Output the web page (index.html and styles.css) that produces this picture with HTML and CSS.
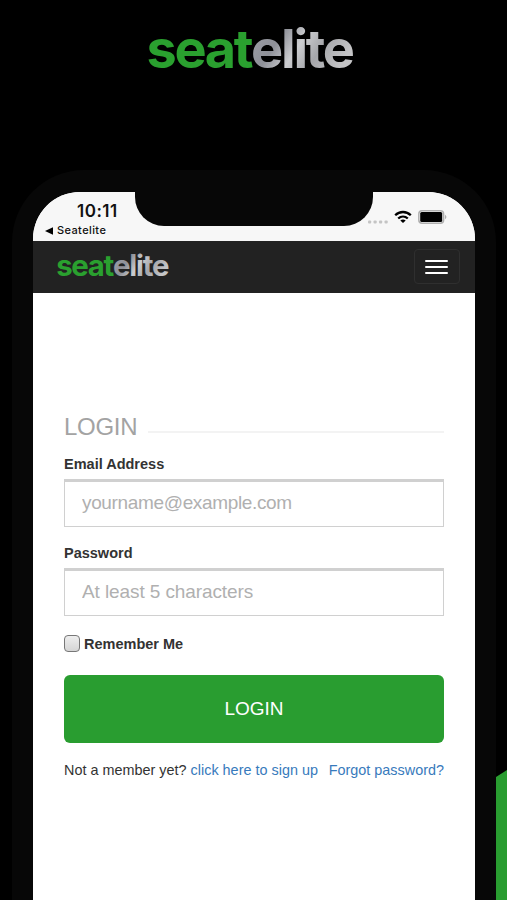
FILE: index.html
```html
<!DOCTYPE html>
<html lang="en">
<head>
  <meta charset="UTF-8" />
  <meta name="viewport" content="width=device-width, initial-scale=1" />
  <title>Seatelite</title>
  <link rel="stylesheet" href="styles.css">
</head>
<body>

  <svg class="corner" viewBox="0 0 11 130">
    <path d="M0 7 L11 0 V130 H0 Z" fill="#299d30" />
  </svg>

  <header class="brand">
    <svg class="logo" viewBox="0 0 206 46" role="img" aria-label="seatelite">
      <defs>
        <linearGradient id="silver" x1="0" y1="0" x2="1" y2="0.4">
          <stop offset="0" stop-color="#a2a3ab" />
          <stop offset="0.35" stop-color="#8e9098" />
          <stop offset="0.55" stop-color="#cccdd0" />
          <stop offset="0.75" stop-color="#a5a6aa" />
          <stop offset="1" stop-color="#c4c4c6" />
        </linearGradient>
      </defs>
      <text class="seat" x="-1.5" y="43" textLength="107" lengthAdjust="spacing">seat</text>
      <text class="elite" x="103" y="43" textLength="104" lengthAdjust="spacing">elite</text>
    </svg>
  </header>

  <main class="phone">
    <div class="screen">
      <div class="status-bar">
        <div class="notch"></div>
        <div class="status-left">
          <div class="time">10:11</div>
          <div class="back">
            <svg width="8" height="8" viewBox="0 0 8 8"><path d="M0 4 L8 0.3 V7.7 Z" /></svg>
            <span>Seatelite</span>
          </div>
        </div>
        <div class="status-right">
          <svg class="dots" width="20" height="4" viewBox="0 0 20 4" fill="#c4c4c4">
            <rect x="0" y="0.5" width="3.2" height="3" rx="1" />
            <rect x="5.5" y="0.5" width="3.2" height="3" rx="1" />
            <rect x="11" y="0.5" width="3.2" height="3" rx="1" />
            <rect x="16.5" y="0.5" width="3.2" height="3" rx="1" />
          </svg>
          <svg class="wifi" width="18" height="14" viewBox="0 0 18 14" fill="none" stroke="#000" stroke-width="2.3">
            <path d="M1.2 5.2 C5.6 0.9 12.4 0.9 16.8 5.2" />
            <path d="M4.2 8.5 C7 5.9 11 5.9 13.8 8.5" />
            <path d="M9 13 L6.3 10.4 C7.9 9.1 10.1 9.1 11.7 10.4 Z" fill="#000" stroke="none" />
          </svg>
          <svg class="battery" width="29" height="14" viewBox="0 0 29 14">
            <rect x="0.8" y="0.8" width="24.8" height="12.4" rx="3.2" fill="#f7f7f7" stroke="#b0b0b0" stroke-width="1.5" />
            <rect x="2.2" y="2.1" width="22" height="9.8" rx="1.5" />
            <path d="M27 4.8 C28.9 5.6 28.9 8.4 27 9.2 Z" fill="#b0b0b0" />
          </svg>
        </div>
      </div>

      <nav class="navbar">
        <svg class="logo-small" viewBox="0 0 206 46" role="img" aria-label="seatelite">
          <text class="seat" x="-1.5" y="43" textLength="107" lengthAdjust="spacing">seat</text>
          <text class="elite" x="103" y="43" textLength="104" lengthAdjust="spacing">elite</text>
        </svg>
        <button class="toggle" aria-label="Menu">
          <span></span>
          <span></span>
          <span></span>
        </button>
      </nav>

      <form class="login-form">
        <h1><span>LOGIN</span></h1>
        <label for="email">Email Address</label>
        <input class="field" id="email" type="text" placeholder="yourname@example.com">
        <label for="password">Password</label>
        <input class="field" id="password" type="password" placeholder="At least 5 characters">
        <label class="remember"><input type="checkbox"><span>Remember Me</span></label>
        <button class="submit" type="button">LOGIN</button>
        <div class="links">
          <span>Not a member yet? <a href="#">click here to sign up</a></span>
          <a href="#">Forgot password?</a>
        </div>
      </form>
    </div>
  </main>

</body>
</html>
```

FILE: styles.css
```css
* {
  box-sizing: border-box;
  margin: 0;
  padding: 0;
}

body {
  position: relative;
  width: 507px;
  height: 900px;
  overflow: hidden;
  background: #000;
  color: #333;
  font-family: "Liberation Sans", Arial, sans-serif;
}

svg {
  display: block;
}

/* green shape behind the phone */
.corner {
  position: absolute;
  right: 0;
  bottom: 0;
  width: 11px;
  height: 130px;
}

.brand {
  height: 170px;
  padding: 25px 0 0 148px;
}

.logo {
  width: 206px;
  height: 46px;
  overflow: visible;
}

.seat,
.elite {
  font-family: Inter, sans-serif;
  font-size: 54px;
  font-weight: 700;
}

.seat {
  fill: #2aa02f;
}

.elite {
  fill: url(#silver);
}

.phone {
  width: 484px;
  height: 760px;
  margin-left: 12px;
  padding: 22px 21px 0;
  background: #070707;
  border-radius: 72px 72px 0 0;
}

.screen {
  height: 738px;
  background: #fff;
  border-radius: 47px 47px 0 0;
  overflow: hidden;
}

.status-bar {
  position: relative;
  display: flex;
  justify-content: space-between;
  height: 49px;
  background: #f7f7f7;
  color: #111;
  font-family: Inter, sans-serif;
}

.notch {
  position: absolute;
  top: 0;
  left: 102px;
  width: 238px;
  height: 34px;
  background: #070707;
  border-radius: 0 0 29px 29px;
}

.time {
  padding: 9px 0 0 44px;
  font-size: 17px;
  font-weight: 600;
  letter-spacing: 0.5px;
  line-height: 20px;
}

.back {
  display: flex;
  align-items: center;
  gap: 4px;
  padding: 2px 0 0 12px;
  font-size: 11px;
  font-weight: 500;
  letter-spacing: 0.4px;
  line-height: 15px;
}

.status-right {
  display: flex;
  padding: 18px 28px 0 0;
}

.dots {
  margin: 10px 6px 0 0;
}

.wifi {
  margin-right: 6px;
}

.navbar {
  display: flex;
  align-items: center;
  justify-content: space-between;
  height: 52px;
  padding: 0 15px 0 24px;
  background: #222;
}

.logo-small {
  width: 112px;
  height: 25px;
  margin-bottom: 4px;
  overflow: visible;
}

.toggle {
  display: flex;
  flex-direction: column;
  align-items: center;
  justify-content: center;
  gap: 4px;
  width: 46px;
  height: 35px;
  margin-bottom: 1px;
  padding-right: 1px;
  background: transparent;
  border: 1px solid #2f2f2f;
  border-radius: 4px;
}

.toggle span {
  width: 23px;
  height: 2px;
  background: #fff;
  border-radius: 1px;
}

.login-form {
  padding: 119px 31px 0 31px;
}

h1 {
  display: flex;
  align-items: center;
  gap: 11px;
  height: 29px;
  margin-bottom: 14px;
  color: #a3a3a3;
  font-size: 24px;
  font-weight: 400;
  letter-spacing: -0.3px;
}

h1::after {
  content: "";
  flex: 1;
  height: 2px;
  margin-top: 10px;
  background: #f3f3f3;
}

label {
  display: block;
  height: 24px;
  font-size: 14.5px;
  font-weight: bold;
  line-height: 18px;
}

.field {
  display: block;
  width: 380px;
  height: 48px;
  margin-bottom: 17px;
  padding: 0 17px 2px;
  background: #fff;
  border: 1px solid #d0d0d0;
  border-top: 3px solid #d0d0d0;
  border-radius: 0;
  font-family: inherit;
  font-size: 19px;
  letter-spacing: -0.35px;
}

#password {
  letter-spacing: -0.1px;
}

.field::placeholder {
  color: #b0b0b0;
}

.remember {
  display: flex;
  align-items: center;
  gap: 4px;
  height: 18px;
  margin: 19px 0 22px;
}

.remember input {
  appearance: none;
  width: 16px;
  height: 17px;
  margin-bottom: 1px;
  background: linear-gradient(#eee, #d5d5d5);
  border: 1px solid #777;
  border-radius: 4px;
}

.submit {
  display: block;
  width: 380px;
  height: 68px;
  background: #299d30;
  border: 0;
  border-radius: 6px;
  color: #fff;
  font-family: inherit;
  font-size: 19px;
}

.links {
  display: flex;
  justify-content: space-between;
  margin-top: 18px;
  font-size: 14.4px;
  letter-spacing: 0.01px;
  line-height: 18px;
  white-space: nowrap;
}

.links a {
  color: #387abc;
  text-decoration: none;
}
```
